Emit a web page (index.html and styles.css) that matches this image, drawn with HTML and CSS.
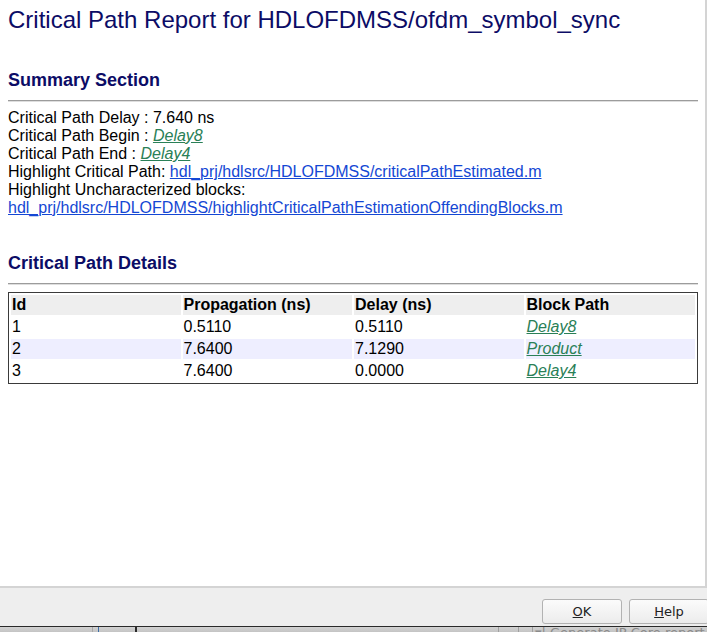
FILE: index.html
```html
<!DOCTYPE html>
<html>
<head>
<meta charset="utf-8">
<title>Critical Path Report</title>
<link rel="stylesheet" href="styles.css">
</head>
<body>
<div class="report">
  <h1 class="title">Critical Path Report for HDLOFDMSS/ofdm_symbol_sync</h1>
  <h2 class="section">Summary Section</h2>
  <hr class="rule">
  <div class="summary">
    <div>Critical Path Delay : 7.640 ns</div>
    <div>Critical Path Begin : <a class="block" href="#">Delay8</a></div>
    <div>Critical Path End : <a class="block" href="#">Delay4</a></div>
    <div>Highlight Critical Path: <a class="file" href="#">hdl_prj/hdlsrc/HDLOFDMSS/criticalPathEstimated.m</a></div>
    <div>Highlight Uncharacterized blocks:</div>
    <div><a class="file" href="#">hdl_prj/hdlsrc/HDLOFDMSS/highlightCriticalPathEstimationOffendingBlocks.m</a></div>
  </div>
  <h2 class="section">Critical Path Details</h2>
  <hr class="rule">
  <table class="details">
    <tr class="head"><th>Id</th><th>Propagation (ns)</th><th>Delay (ns)</th><th>Block Path</th></tr>
    <tr><td>1</td><td>0.5110</td><td>0.5110</td><td><a class="block" href="#">Delay8</a></td></tr>
    <tr class="alt"><td>2</td><td>7.6400</td><td>7.1290</td><td><a class="block" href="#">Product</a></td></tr>
    <tr><td>3</td><td>7.6400</td><td>0.0000</td><td><a class="block" href="#">Delay4</a></td></tr>
  </table>
</div>
<div class="buttonbar">
  <button class="btn"><u>O</u>K</button>
  <button class="btn"><u>H</u>elp</button>
</div>
<div class="underbar">
  <div class="seg s1"></div>
  <div class="seg s2"></div>
  <div class="seg s3"></div>
  <div class="seg s4"></div>
  <div class="seg s5"></div>
  <div class="seg s6"></div>
  <div class="seg s7"><span class="ghost">▾| Generate IP Core report</span></div>
</div>
</body>
</html>
```
FILE: styles.css
```css
html, body {
  margin: 0;
  padding: 0;
  width: 707px;
  height: 632px;
  overflow: hidden;
  background: #eeeeee;
  font-family: "Liberation Sans", Arial, sans-serif;
}

.report {
  box-sizing: border-box;
  width: 707px;
  height: 588px;
  background: #ffffff;
  border-right: 2px solid #d4d4d4;
  border-bottom: 2px solid #d4d4d4;
  padding: 6px 7px 0 8px;
  overflow: hidden;
  font-size: 16px;
  color: #000000;
}

.title {
  margin: 0;
  font-size: 24px;
  font-weight: normal;
  color: #0c0c66;
  line-height: 28px;
  white-space: nowrap;
}

.section {
  margin: 36px 0 9px;
  font-size: 18px;
  font-weight: bold;
  color: #0c0c66;
  line-height: 21px;
}

.rule {
  margin: 0 0 7px;
  border: none;
  border-top: 1px solid #9c9c9c;
  border-bottom: 1px solid #dedede;
  height: 0;
}

.summary {
  line-height: 18px;
}

.summary div {
  white-space: nowrap;
}

a.file {
  color: #1447d4;
  text-decoration: underline;
}

a.block {
  color: #2a8057;
  font-style: italic;
  text-decoration: underline;
}

.details {
  width: 100%;
  table-layout: fixed;
  border: 1px solid #3a3a3a;
  border-spacing: 2px;
  margin-top: 0;
  font-size: 16px;
}

.details th,
.details td {
  padding: 1px;
  text-align: left;
  line-height: 18px;
  white-space: nowrap;
}

.details .head th {
  background: #eeeeee;
  font-weight: bold;
}

.details .alt td {
  background: #eeeeff;
}

.buttonbar {
  display: flex;
  justify-content: flex-end;
  gap: 7px;
  height: 39px;
  box-sizing: border-box;
  padding-top: 11px;
  margin-right: -2px;
  background: #eeeeee;
  border-bottom: 1px solid #2a2a2a;
}

.btn {
  box-sizing: border-box;
  width: 80px;
  height: 25px;
  flex: none;
  border: 1px solid #b2b2b2;
  border-radius: 3px;
  background: linear-gradient(#fbfbfb, #ececec);
  font-family: "DejaVu Sans", Verdana, sans-serif;
  font-size: 13px;
  color: #222222;
  padding: 0;
}

.btn u {
  text-decoration: underline;
}

.underbar {
  display: flex;
  height: 5px;
  background: linear-gradient(#d2d2d2, #c4c4c4);
  overflow: hidden;
}

.seg {
  height: 5px;
  flex: none;
}

.s1 { width: 92px; }
.s2 { width: 5px; border-left: 1px solid #a8a8a8; }
.s3 { width: 36px; border-left: 1px solid #3d6fa8; }
.s4 { width: 361px; border-left: 2px solid #2a2a2a; }
.s5 { width: 19px; border-left: 1px solid #a0a0a0; }
.s6 { width: 13px; border-left: 1px solid #a0a0a0; }
.s7 {
  flex: 1;
  border-left: 1px solid #a0a0a0;
  position: relative;
  overflow: hidden;
}

.ghost {
  position: absolute;
  left: 2px;
  top: -2px;
  font-family: "DejaVu Sans", Verdana, sans-serif;
  font-size: 13px;
  line-height: 16px;
  color: #8a8a8a;
  white-space: nowrap;
}
```
